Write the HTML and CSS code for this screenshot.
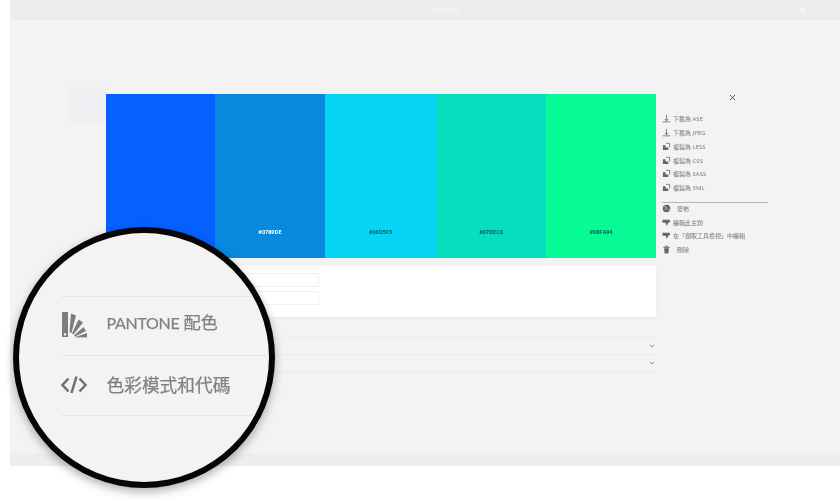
FILE: index.html
```html
<!DOCTYPE html>
<html lang="zh-Hant">
<head>
<meta charset="utf-8">
<title>Theme</title>
<link rel="stylesheet" href="styles.css">
</head>
<body>
<div class="app">
  <header class="topbar">
    <span class="brand">Monthly</span>
    <div class="bar-icons"><i></i><i></i><i></i><i></i><i class="lit"></i><i></i><i></i></div>
  </header>
  <main class="main">
    <div class="side-tile"></div>
    <section class="content">
      <div class="swatches">
        <div class="swatch s1"></div>
        <div class="swatch s2"><span>#0789DE</span></div>
        <div class="swatch s3"><span>#06D5F5</span></div>
        <div class="swatch s4"><span>#07DEC0</span></div>
        <div class="swatch s5"><span>#08FA94</span></div>
      </div>
      <div class="card">
        <div class="field"></div>
        <div class="field"></div>
      </div>
      <div class="accordion">
        <div class="acc-row"><svg class="chev" viewBox="0 0 6 4"><path d="M.8.8 3 3 5.2.8"/></svg></div>
        <div class="acc-row"><svg class="chev" viewBox="0 0 6 4"><path d="M.8.8 3 3 5.2.8"/></svg></div>
      </div>
    </section>
    <aside class="menu">
      <div class="close"><svg viewBox="0 0 7 7"><path d="M1 1l5 5M6 1 1 6"/></svg></div>
      <ul class="items">
        <li><svg viewBox="0 0 10 10"><path d="M5 1v6.500M3 5.500l2 2 2-2M.8 8.700h8.400"/></svg><span>下載為 ASE</span></li>
        <li><svg viewBox="0 0 10 10"><path d="M5 1v6.500M3 5.500l2 2 2-2M.8 8.700h8.400"/></svg><span>下載為 JPEG</span></li>
        <li><svg viewBox="0 0 10 10"><path class="fill" d="M1 3.500h3V6h3v3H1z"/><path d="M4.500 1.500h4V6"/></svg><span>複製為 LESS</span></li>
        <li><svg viewBox="0 0 10 10"><path class="fill" d="M1 3.500h3V6h3v3H1z"/><path d="M4.500 1.500h4V6"/></svg><span>複製為 CSS</span></li>
        <li><svg viewBox="0 0 10 10"><path class="fill" d="M1 3.500h3V6h3v3H1z"/><path d="M4.500 1.500h4V6"/></svg><span>複製為 SASS</span></li>
        <li><svg viewBox="0 0 10 10"><path class="fill" d="M1 3.500h3V6h3v3H1z"/><path d="M4.500 1.500h4V6"/></svg><span>複製為 XML</span></li>
        <li class="rule"></li>
        <li><svg viewBox="0 0 10 10"><circle class="fill" cx="5" cy="5" r="4.200"/><path class="cut" d="M2.500 2.500 5 4 4 6.500M6.500 5.500 8.500 7"/></svg><span class="wide">發佈</span></li>
        <li><svg viewBox="0 0 10 10"><path class="fill" d="M.5 2h7.500L9.500 3.800 7 5.300 5.200 8.800 4 5.300H.5z"/></svg><span>編輯此主題</span></li>
        <li><svg viewBox="0 0 10 10"><path class="fill" d="M.5 2h7.500L9.500 3.800 7 5.300 5.200 8.800 4 5.300H.5z"/></svg><span>在「擷取工具檢視」中編輯</span></li>
        <li><svg viewBox="0 0 10 10"><path class="fill" d="M2.300 3.500h5.400L7 9.500H3zM1.500 2h7v1h-7zM3.800.8h2.400V2H3.800z"/></svg><span class="wide">刪除</span></li>
      </ul>
    </aside>
  </main>
  <footer class="bottombar"></footer>
</div>

<div class="lens">
  <div class="lens-list">
    <div class="lens-row first">
      <svg class="lens-icon" viewBox="0 0 26 26">
        <path d="M1 0h6v25H1zM3 21.500a1.300 1.300 0 1 0 2 0 1.300 1.300 0 0 0-2 0z" fill-rule="evenodd"/>
        <path d="M8.500 20 10 1.500 15 3.500 10.500 21z"/>
        <path d="M11 21.500 17.500 7.500 22 10.500 12.500 22.500z"/>
        <path d="M13 23.500 22.500 15 25 19 14 24.500z"/>
        <path d="M13.500 25.200 26 21v4.500z"/>
      </svg>
      <span class="lens-label"><span class="latin">PANTONE</span> 配色</span>
    </div>
    <div class="lens-row">
      <svg class="lens-icon code" viewBox="0 0 26 26"><path d="M7.500 6.500 1.500 13l6 6.500M10.500 21 15.500 4.500M18.500 6.500l6 6.500-6 6.500"/></svg>
      <span class="lens-label">色彩模式和代碼</span>
    </div>
  </div>
</div>
</body>
</html>
```
FILE: styles.css
```css
* { box-sizing: border-box; }

html, body {
  margin: 0;
  height: 503px;
  overflow: hidden;
  background: #fff;
  font-family: "Open Sans", "Noto Sans CJK TC", sans-serif;
}

.app {
  margin-left: 10px;
  width: 830px;
  height: 466px;
  display: flex;
  flex-direction: column;
  background: #f3f3f3;
}

.topbar {
  height: 20px;
  flex: none;
  background: #ececec;
  display: flex;
  align-items: center;
  padding-left: 422px;
}

.brand {
  font-size: 7px;
  color: #f8f8f8;
  filter: blur(.5px);
}

.bar-icons {
  margin-left: auto;
  margin-right: 8px;
  display: flex;
  gap: 7px;
  filter: blur(.6px);
}

.bar-icons i {
  width: 6px;
  height: 6px;
  background: #eeeeee;
}

.bar-icons .lit {
  background: #f3f3f3;
}

.main {
  flex: 1;
  min-height: 0;
  display: flex;
  align-items: flex-start;
  padding: 67px 0 0 60px;
}

.bottombar {
  height: 13px;
  flex: none;
  background: #eeeeee;
}

.side-tile {
  width: 36px;
  height: 35px;
  flex: none;
  background: #eef0f4;
  filter: blur(.6px);
}

.content {
  width: 550px;
  flex: none;
  margin-top: 7px;
}

.swatches {
  display: flex;
  height: 164px;
}

.swatch {
  flex: 0 0 110px;
  display: flex;
  align-items: flex-end;
  justify-content: center;
  padding-bottom: 22px;
  font-size: 5.500px;
  font-weight: 700;
  line-height: 7px;
  color: #0b5c5c;
}

.swatch span { filter: blur(.35px); }

.s1 { background: #0560fd; flex-basis: 109px; }
.s2 { background: #0789de; color: #fff; }
.s3 { background: #06d5f5; flex-basis: 111px; }
.s4 { background: #07dec0; }
.s5 { background: #08fa94; }

.card {
  margin-top: 8px;
  height: 51px;
  padding: 7px 0 0 44px;
  background: #fff;
  box-shadow: 0 1px 2px rgba(0, 0, 0, .06);
}

.field {
  width: 169px;
  height: 14px;
  margin-bottom: 4px;
  border: 1px solid #f2f2f2;
}

.accordion {
  margin-top: 20px;
  border-top: 1px solid #ececec;
}

.acc-row {
  height: 17px;
  display: flex;
  align-items: center;
  justify-content: flex-end;
  padding-right: 1px;
  border-bottom: 1px solid #ececec;
}

.chev {
  width: 6px;
  height: 4px;
  fill: none;
  stroke: #777;
  stroke-width: .8;
}

.menu {
  width: 106px;
  flex: none;
  margin: 7px 0 0 6px;
  color: #777;
}

.close {
  height: 18px;
  padding-left: 67px;
}

.close svg {
  display: block;
  width: 7px;
  height: 7px;
  fill: none;
  stroke: #555;
  stroke-width: 1;
  filter: blur(.2px);
}

.items {
  list-style: none;
  margin: 0;
  padding: 0;
}

.items li {
  height: 13.750px;
  display: flex;
  align-items: center;
  gap: 2px;
  font-size: 6px;
  filter: blur(.3px);
}

.items svg {
  width: 9px;
  height: 9px;
  flex: none;
  fill: none;
  stroke: #666;
  stroke-width: .9;
}

.items .fill { fill: #666; stroke: none; }
.items .cut { stroke: #f3f3f3; stroke-width: .8; }
.items .wide { margin-left: 4px; }

.items li.rule {
  height: 1px;
  margin: 7px 0 -1px;
  background: #b5b5b5;
}

.lens {
  position: absolute;
  left: 13px;
  top: 227px;
  width: 262px;
  height: 261px;
  border: 6.500px solid #060606;
  border-radius: 50%;
  overflow: hidden;
  background: #f3f3f3;
  box-shadow: 0 4px 10px rgba(0, 0, 0, .3);
  padding: 62.500px 0 0 41.500px;
}

.lens-list {
  width: 300px;
  border-top: 1px solid #e6e6e6;
}

.lens-row {
  height: 59.500px;
  display: flex;
  align-items: center;
  gap: 20px;
  border-bottom: 1px solid #e6e6e6;
  font-family: "Lato", "Noto Sans CJK TC", sans-serif;
  font-size: 17.700px;
  color: #808080;
  white-space: nowrap;
  filter: blur(.5px);
}

.lens-label {
  -webkit-text-stroke: .25px #808080;
  margin-bottom: 2px;
}

.lens-row.first .lens-label {
  font-size: 17px;
  margin-bottom: 8px;
}

.latin {
  font-size: 16px;
  letter-spacing: -.3px;
}

.lens-row.first .lens-icon {
  margin-bottom: 2px;
}

.lens-icon {
  width: 26px;
  height: 26px;
  flex: none;
  fill: #7c7c7c;
}

.code {
  fill: none;
  stroke: #707070;
  stroke-width: 2.500;
}
```
